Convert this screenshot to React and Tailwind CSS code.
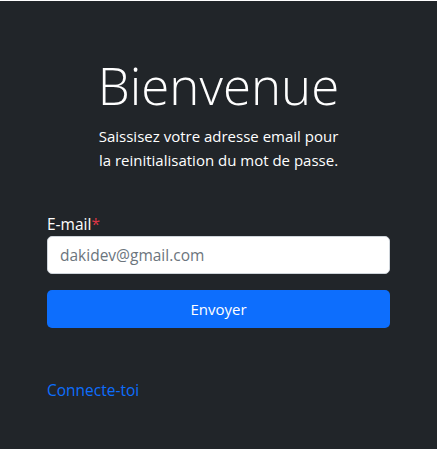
import React, { useState } from 'react';

const font = { fontFamily: '"Open Sans", "Noto Sans", Arial, sans-serif' };

export default function App() {
    const [email, setEmail] = useState('');

    return (
        <div className="w-[439px] h-[449px] bg-white pt-px">
            <div className="w-[437px] h-[448px] bg-[#212529] text-white px-[47px]" style={font}>
                {/* Header */}
                <div className="pt-[51px] text-center">
                    <h1 className="text-[51px] leading-[66px] font-light">Bienvenue</h1>
                    <p className="mt-[6px] text-[15px] leading-6">
                        Saissisez votre adresse email pour
                        <br />
                        la reinitialisation du mot de passe.
                    </p>
                </div>

                {/* Form */}
                <form className="mt-10" onSubmit={(e) => e.preventDefault()}>
                    <label htmlFor="email" className="block text-[15.5px] leading-6">
                        E-mail<span className="text-[#dc3545]">*</span>
                    </label>
                    <input
                        id="email"
                        type="email"
                        value={email}
                        onChange={(e) => setEmail(e.target.value)}
                        placeholder="dakidev@gmail.com"
                        className="block w-full h-[38px] rounded-[5px] border border-[#ced4da] bg-white px-3 text-[15.5px] text-[#212529] placeholder:text-[#6c757d] outline-none"
                    />
                    <button
                        type="submit"
                        className="mt-4 w-full h-[38px] rounded-[5px] bg-[#0d6efd] text-[15px] text-white"
                    >
                        Envoyer
                    </button>
                </form>

                <a href="#" className="block mt-[50px] text-[15.5px] leading-6 text-[#0d6efd]">
                    Connecte-toi
                </a>
            </div>
        </div>
    );
}
